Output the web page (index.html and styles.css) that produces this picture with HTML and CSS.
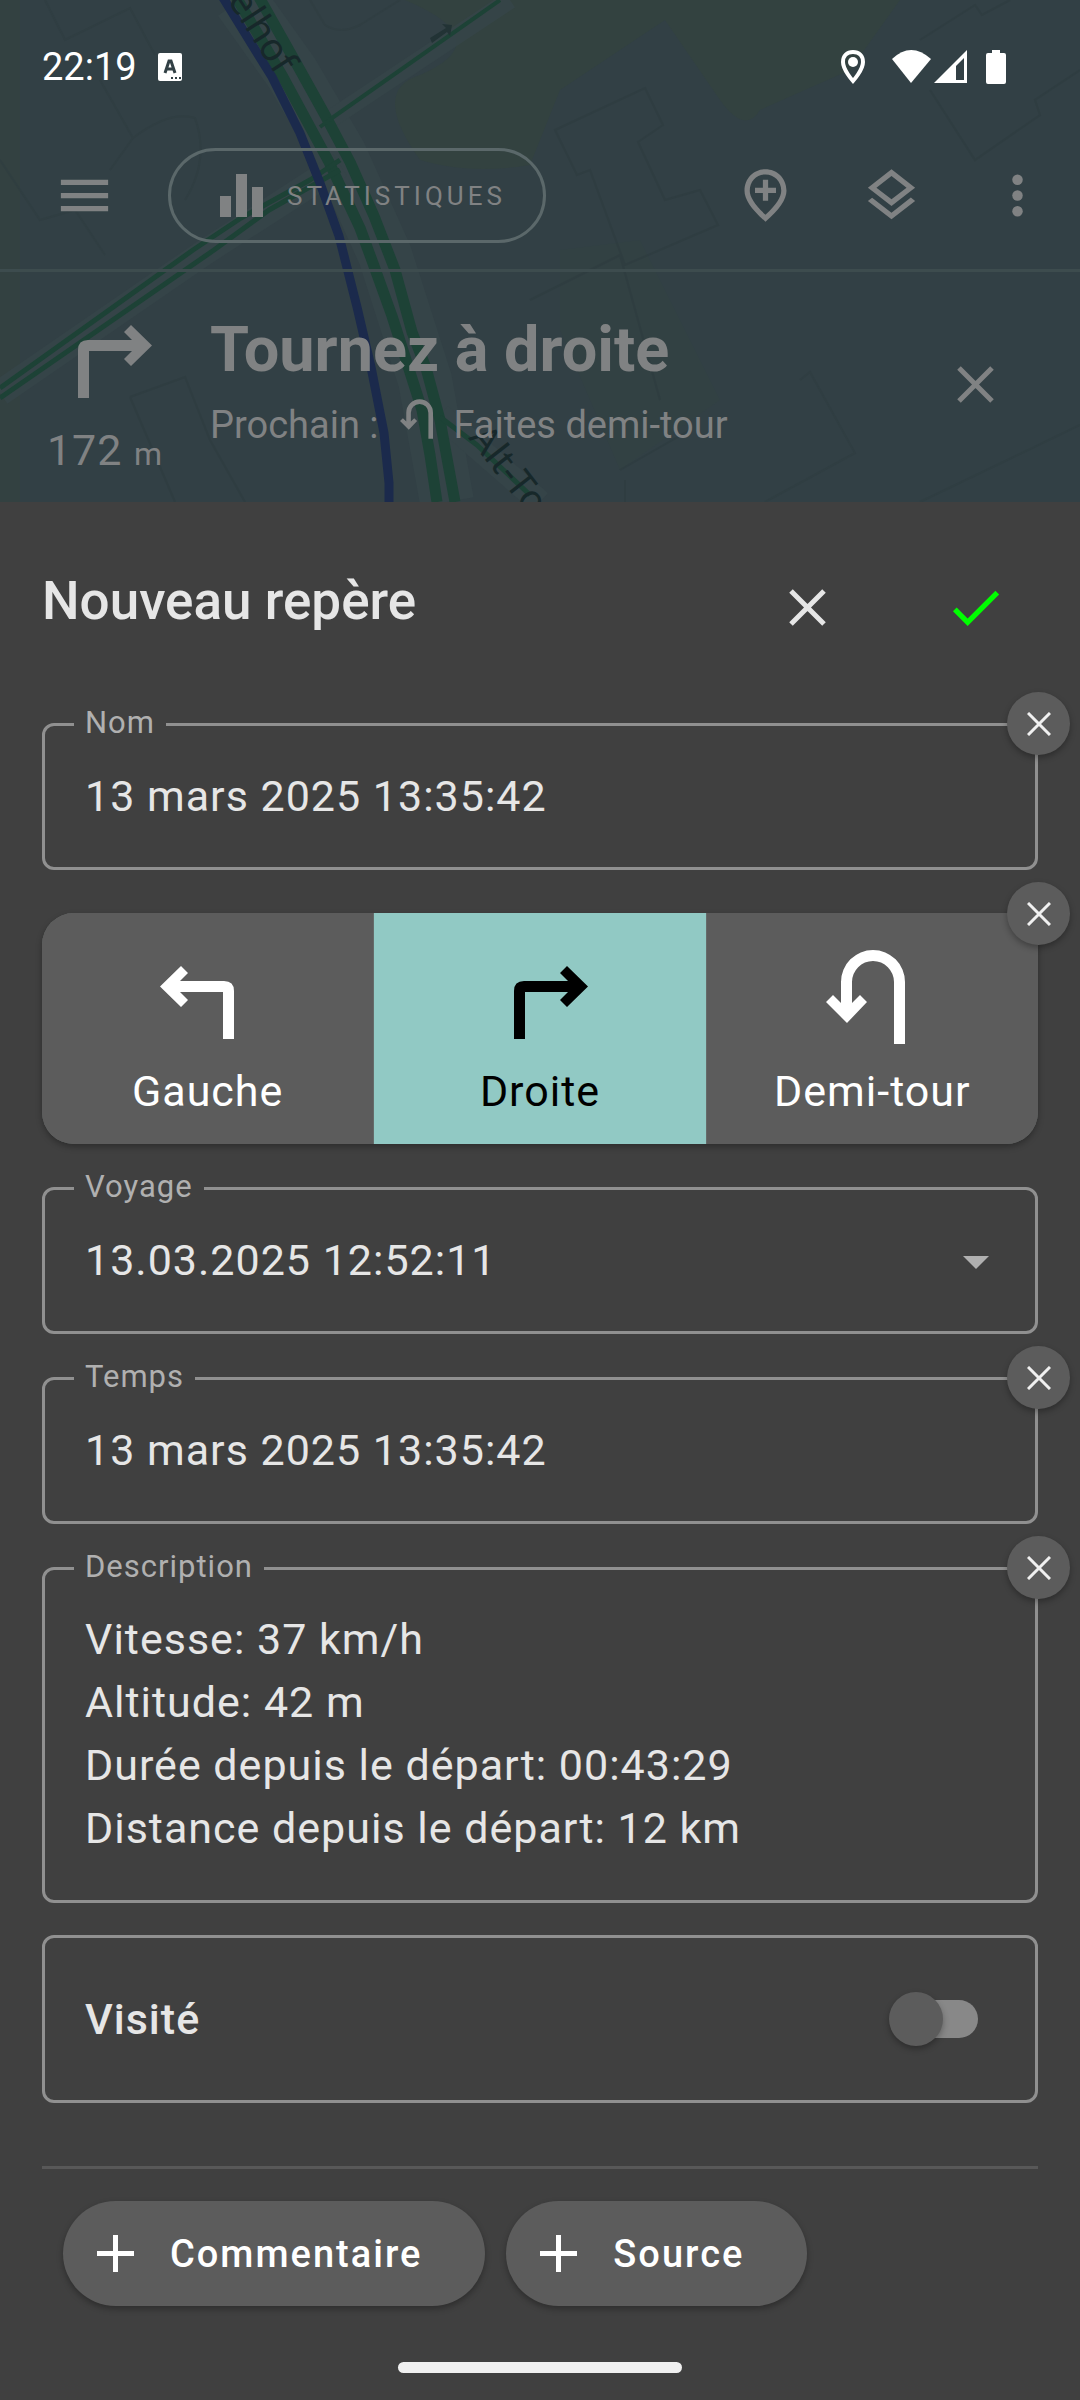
FILE: index.html
```html
<!DOCTYPE html>
<html lang="fr">
<head>
<meta charset="utf-8">
<meta name="viewport" content="width=device-width, initial-scale=1">
<title>Nouveau repère</title>
<link rel="stylesheet" href="styles.css">
</head>
<body>
<header class="top">
  <svg class="map" viewBox="0 0 1080 502" preserveAspectRatio="xMidYMin slice" aria-hidden="true">
    <rect width="1080" height="502" fill="#324045"/>
    <g fill="#334240">
      <path d="M405 0H900L850 70L760 110Q745 135 720 100L665 20L560 90L530 165Q470 175 420 160Q370 90 420 75Q500 40 405 0Z"/>
      <path d="M0 0H20V502H0Z" opacity=".6"/>
      <path d="M560 250L640 240L720 400L620 470L560 330Z" opacity=".25"/>
    </g>
    <g fill="none" stroke="#2d3b3f" stroke-width="2" opacity=".5">
      <path d="M45 0L65 40L130 8L155 55M100 80L133 138Q170 110 195 118Q210 160 185 200M133 138L110 170M0 160L40 220L75 210L105 255"/>
      <path d="M130 397L185 377L210 440L245 502M130 397L175 502"/>
      <path d="M555 130L645 88L663 125L638 142L665 200L700 190L718 225L625 265L590 170L577 175Z"/>
      <path d="M930 90L975 160L1040 115L1035 100L1080 70M920 40L975 5L982 15L1010 0"/>
      <path d="M530 300L620 255L660 400M800 380L810 372L855 453L765 502M620 470L690 430M920 502L1080 425M625 480V502"/>
      <path d="M310 0L325 25Q340 35 360 25L400 0"/>
    </g>
    <g fill="none" stroke="#37464a" opacity=".7">
      <path d="M240 0L292 73L340 155L385 255L425 380L447 502" stroke-width="54"/>
      <path d="M510 0L332 118" stroke-width="18"/>
      <path d="M0 393L205 252L340 165" stroke-width="26"/>
      <path d="M440 415L540 502" stroke-width="24"/>
    </g>
    <g fill="none" stroke="#1d4236" stroke-linejoin="round">
      <path d="M232 -10L283 77L329 162L360 228L374 266L392 316L408 366L422 410L430 455L437 502" stroke-width="11"/>
      <path d="M255 -10L300 70L325 115L350 162L374 216L395 270L412 332L426 368L440 420L455 502" stroke-width="11"/>
      <path d="M500 0L332 118L320 127" stroke-width="4"/>
      <path d="M0 388L193 250L241 218L310 180L340 160M0 398L214 250L269 210L340 170" stroke-width="5"/>
      <path d="M440 417L477 445L530 495" stroke-width="5"/>
    </g>
    <path d="M222 -4L272 77L300 133L320 183L339 236L357 307L371 367L384 433L389 483V502" fill="none" stroke="#1b2a4c" stroke-width="9"/>
    <path d="M430 38L446 28L442 24L452 25L450 36L447 32L432 43Z" fill="#223335"/>
    <g class="map__labels">
      <text transform="translate(227 0) rotate(57)">elhof</text>
      <text transform="translate(468 438) rotate(52)">Alt-To</text>
    </g>
  </svg>

  <div class="status">
    <span class="status__time">22:19</span>
    <svg width="24" height="28" viewBox="0 0 24 28" aria-hidden="true"><rect width="24" height="28" rx="2" fill="#fff"/><path d="M7 20L11 8H13L17 20M9 16H15" fill="none" stroke="#324045" stroke-width="3"/><path d="M13 24h2v2h-2zM17 24h2v2h-2zM21 24h2v2h-2z" fill="#324045"/></svg>
    <div class="status__right">
      <svg width="24" height="34" viewBox="0 0 24 34" aria-hidden="true"><path d="M12 2C6 2 2 6 2 12c0 8 10 19 10 19s10-11 10-19c0-6-4-10-10-10z" fill="none" stroke="#fff" stroke-width="4"/><circle cx="12" cy="12" r="5" fill="#fff"/></svg>
      <svg class="status__net" width="76" height="34" viewBox="0 0 76 34" aria-hidden="true" fill="#fff"><path d="M0 9Q19-9 39 9L19 33Z"/><path fill-rule="evenodd" d="M42 33L75 0V33ZM64 30H72V8L64 16Z"/></svg>
      <svg width="20" height="34" viewBox="0 0 20 34" aria-hidden="true"><path d="M6 0h8v3h4q2 0 2 2v27q0 2-2 2H2q-2 0-2-2V5q0-2 2-2h4z" fill="#fff"/></svg>
    </div>
  </div>

  <nav class="toolbar">
    <button class="tool tool--menu" type="button" aria-label="Menu"><svg class="icon" viewBox="0 0 24 24"><path d="M3 18h18v-2H3zM3 13h18v-2H3zM3 6v2h18V6z"/></svg></button>
    <button class="stats" type="button"><svg width="43" height="43" viewBox="0 0 43 43" aria-hidden="true"><path d="M0 22h11v21H0zM16 0h11v43H16zM32 13h11v30H32z"/></svg>STATISTIQUES</button>
    <div class="toolbar__end">
      <button class="tool" type="button" aria-label="Ajouter un repère"><svg class="icon" viewBox="0 0 24 24"><path fill-rule="evenodd" d="M12 2C16.2 2 20 5.22 20 10.2C20 13.5 17.3 17.4 12 22C6.7 17.4 4 13.5 4 10.2C4 5.22 7.8 2 12 2ZM18 10.2C18 6.57 15.35 4 12 4S6 6.57 6 10.2C6 12.54 7.95 15.64 12 19.34C16.05 15.64 18 12.54 18 10.2Z"/><path d="M11 6h2v3h3v2h-3v3h-2v-3H8V9h3z"/></svg></button>
      <button class="tool" type="button" aria-label="Calques"><svg class="icon" viewBox="0 0 24 24"><path d="M11.99 18.54l-7.37-5.73L3 14.07l9 7 9-7-1.63-1.27zM12 16l7.36-5.73L21 9l-9-7-9 7 1.63 1.27zM12 4.53L17.74 9 12 13.47 6.26 9z"/></svg></button>
      <button class="tool" type="button" aria-label="Plus d'options"><svg class="icon" viewBox="0 0 24 24"><circle cx="12" cy="6" r="2"/><circle cx="12" cy="12" r="2"/><circle cx="12" cy="18" r="2"/></svg></button>
    </div>
  </nav>

  <section class="guide">
    <div class="guide__turn">
      <svg width="94" height="73" viewBox="4 16 94 73" aria-hidden="true"><path d="M35 89V42H78L70 50L77 57L98 36.500L77 16L70 23L78 31H34Q24 31 24 41V89Z"/></svg>
      <p class="guide__distance">172 <small>m</small></p>
    </div>
    <div class="guide__text">
      <h2>Tournez à droite</h2>
      <p>Prochain : <svg width="33" height="40" viewBox="4 0 79 94" aria-hidden="true"><path d="M83 94H72V32A21 21 0 0 0 30 32V53L38 45L45 52L25 73L4 52L11 45L19 53V32A32 32 0 0 1 83 32Z"/></svg> Faites demi-tour</p>
    </div>
    <button class="action" type="button" aria-label="Fermer"><svg class="cross" viewBox="0 0 37 37"><path d="M2 2L35 35M35 2L2 35"/></svg></button>
  </section>
</header>

<main class="sheet">
  <form class="form">
    <div class="form__head">
      <h1>Nouveau repère</h1>
      <button class="action" type="button" aria-label="Annuler"><svg class="cross" viewBox="0 0 37 37"><path d="M2 2L35 35M35 2L2 35"/></svg></button>
      <button class="action action--ok" type="button" aria-label="Valider"><svg class="icon" viewBox="0 0 24 24"><path d="M9 16.170L4.830 12l-1.420 1.410L9 19 21 7l-1.410-1.410z"/></svg></button>
    </div>

    <div class="field">
      <fieldset>
        <legend><label for="name">Nom</label></legend>
        <input id="name" type="text" value="13 mars 2025 13:35:42">
      </fieldset>
      <button class="clear" type="button" aria-label="Effacer le nom"><svg viewBox="0 0 24 24"><path d="M1 1L23 23M23 1L1 23"/></svg></button>
    </div>

    <div class="turns">
      <div class="turns__group" role="radiogroup" aria-label="Direction">
        <label class="turn"><input type="radio" name="turn">
          <svg viewBox="0 0 100 95" aria-hidden="true"><path d="M65 89V42H22L30 50L23 57L2 36.500L23 16L30 23L22 31H66Q76 31 76 41V89Z"/></svg><span>Gauche</span></label>
        <label class="turn"><input type="radio" name="turn" checked>
          <svg viewBox="0 0 100 95" aria-hidden="true"><path d="M35 89V42H78L70 50L77 57L98 36.500L77 16L70 23L78 31H34Q24 31 24 41V89Z"/></svg><span>Droite</span></label>
        <label class="turn"><input type="radio" name="turn">
          <svg viewBox="0 0 100 95" aria-hidden="true"><path d="M83 94H72V32A21 21 0 0 0 30 32V53L38 45L45 52L25 73L4 52L11 45L19 53V32A32 32 0 0 1 83 32Z"/></svg><span>Demi-tour</span></label>
      </div>
      <button class="clear" type="button" aria-label="Effacer la direction"><svg viewBox="0 0 24 24"><path d="M1 1L23 23M23 1L1 23"/></svg></button>
    </div>

    <div class="field">
      <fieldset>
        <legend><label for="trip">Voyage</label></legend>
        <div class="select">
          <select id="trip"><option>13.03.2025 12:52:11</option></select>
          <svg width="26" height="18" viewBox="0 0 26 18" aria-hidden="true"><path d="M0 5H26L13 18Z"/></svg>
        </div>
      </fieldset>
    </div>

    <div class="field">
      <fieldset>
        <legend><label for="time">Temps</label></legend>
        <input id="time" type="text" value="13 mars 2025 13:35:42">
      </fieldset>
      <button class="clear" type="button" aria-label="Effacer le temps"><svg viewBox="0 0 24 24"><path d="M1 1L23 23M23 1L1 23"/></svg></button>
    </div>

    <div class="field">
      <fieldset>
        <legend><label for="description">Description</label></legend>
        <textarea id="description" rows="4">Vitesse: 37 km/h
Altitude: 42 m
Durée depuis le départ: 00:43:29
Distance depuis le départ: 12 km</textarea>
      </fieldset>
      <button class="clear" type="button" aria-label="Effacer la description"><svg viewBox="0 0 24 24"><path d="M1 1L23 23M23 1L1 23"/></svg></button>
    </div>

    <label class="visited"><span>Visité</span><input class="switch" type="checkbox" role="switch"></label>

    <div class="extras">
      <button class="chip" type="button"><svg viewBox="0 0 37 37" aria-hidden="true"><path d="M16 0h5v16h16v5H21v16h-5V21H0v-5h16z"/></svg>Commentaire</button>
      <button class="chip" type="button"><svg viewBox="0 0 37 37" aria-hidden="true"><path d="M16 0h5v16h16v5H21v16h-5V21H0v-5h16z"/></svg>Source</button>
    </div>
  </form>
  <div class="home"></div>
</main>
</body>
</html>
```
FILE: styles.css
```css
:root {
  --surface: #404040;
  --raised: #5c5c5c;
  --outline: #909090;
  --text: #e6e6e6;
  --hint: #b0b0b0;
  --dimmed: #808283;
  --accent: #91c9c4;
  --shadow: 0 3px 6px rgba(0, 0, 0, .3);
}

* {
  box-sizing: border-box;
}

body {
  margin: 0;
  min-height: 100vh;
  display: flex;
  flex-direction: column;
  background: var(--surface);
  color: var(--text);
  font-family: Roboto, sans-serif;
  font-size: 43px;
}

h1, h2, p {
  margin: 0;
}

svg {
  display: block;
  flex: none;
}

button, input, select, textarea {
  margin: 0;
  padding: 0;
  border: 0;
  background: none;
  color: inherit;
  font: inherit;
  letter-spacing: inherit;
}

button {
  display: flex;
  align-items: center;
  justify-content: center;
}

.icon {
  width: 63px;
  height: 63px;
  fill: currentColor;
}

.cross {
  width: 37px;
  height: 37px;
  fill: none;
  stroke: currentColor;
  stroke-width: 5;
}

/* Map and guidance */
.top {
  position: relative;
  overflow: hidden;
  color: var(--dimmed);
}

.map {
  position: absolute;
  inset: 0;
  width: 100%;
  height: 100%;
  z-index: -1;
}

.map__labels {
  fill: #17282a;
  font-family: "Noto Sans", sans-serif;
  font-size: 38px;
}

.status {
  display: flex;
  align-items: center;
  gap: 21px;
  height: 122px;
  padding: 12px 74px 0 42px;
  color: #fff;
}

.status__time {
  font-size: 38px;
}

.status__right {
  display: flex;
  align-items: center;
  gap: 18px;
  margin-left: auto;
}

.status__net {
  margin-left: 9px;
}

.toolbar {
  display: flex;
  align-items: center;
  height: 150px;
  border-bottom: 3px solid #3d4c4e;
}

.tool {
  width: 126px;
  height: 126px;
}

.tool--menu {
  width: 168px;
}

.stats {
  gap: 24px;
  height: 95px;
  padding: 0 37px 0 49px;
  border: 3px solid #5b686a;
  border-radius: 48px;
  font-size: 26px;
  letter-spacing: 4px;
  fill: currentColor;
}

.toolbar__end {
  display: flex;
  margin-left: auto;
}

.guide {
  display: flex;
  min-height: 230px;
  padding: 0 42px 6px 0;
  fill: currentColor;
}

.guide__turn {
  display: flex;
  flex-direction: column;
  align-items: center;
  width: 210px;
  padding-top: 53px;
}

.guide__distance {
  margin-top: 27px;
  line-height: 50px;
  letter-spacing: 1px;
}

.guide__distance small {
  font-size: 32px;
}

.guide__text {
  flex: 1;
  padding-top: 41px;
}

.guide__text h2 {
  font-size: 63px;
  font-weight: 700;
  line-height: 74px;
}

.guide__text p {
  display: flex;
  align-items: center;
  gap: 21px;
  margin-top: 12px;
  font-size: 38px;
  line-height: 44px;
}

.guide__text svg {
  margin-bottom: 12px;
}

.action {
  align-self: center;
  width: 126px;
  height: 126px;
}

.action--ok {
  color: #0f0;
}

/* Bottom sheet */
.sheet {
  display: flex;
  flex: 1;
  flex-direction: column;
  padding: 42px 42px 27px;
}

.form__head {
  display: flex;
  gap: 42px;
  height: 126px;
  margin-bottom: 35px;
}

.form__head h1 {
  flex: 1;
  padding-top: 26px;
  font-size: 53px;
  font-weight: 500;
  line-height: 62px;
}

.field, .turns {
  position: relative;
}

.field {
  margin-top: 25px;
}

.turns {
  margin-top: 43px;
}

.field fieldset {
  min-width: 0;
  margin: 0;
  padding: 0 29px 19px;
  border: 3px solid var(--outline);
  border-radius: 12px;
}

.field legend {
  padding: 0 11px 4px;
  color: var(--hint);
  font-size: 31px;
  line-height: 35px;
  letter-spacing: 1px;
}

.field label {
  display: block;
}

.field input, .field select, .field textarea {
  display: block;
  width: 100%;
  height: 104px;
  padding: 0 11px;
  appearance: none;
  letter-spacing: 1px;
  outline: 0;
}

.field textarea {
  height: 293px;
  padding: 20px 11px;
  line-height: 63px;
  resize: none;
  overflow: hidden;
}

.select {
  display: grid;
  align-items: center;
}

.select > * {
  grid-area: 1 / 1;
}

.select svg {
  justify-self: end;
  margin-right: 17px;
  fill: var(--hint);
  pointer-events: none;
}

.clear {
  position: absolute;
  top: -13px;
  right: -32px;
  width: 63px;
  height: 63px;
  border-radius: 50%;
  background: var(--raised);
  box-shadow: var(--shadow);
}

.turns .clear {
  top: -31px;
}

.clear svg {
  width: 24px;
  height: 24px;
  fill: none;
  stroke: #f0f0f0;
  stroke-width: 3;
}

.turns__group {
  display: grid;
  grid-template-columns: repeat(3, 1fr);
  gap: 1px;
  overflow: hidden;
  border-radius: 32px;
  background: #656b6a;
  box-shadow: var(--shadow);
}

.turn {
  display: flex;
  flex-direction: column;
  align-items: center;
  gap: 8px;
  height: 231px;
  padding-top: 37px;
  background: var(--raised);
  color: #fff;
  fill: currentColor;
  letter-spacing: 1px;
  line-height: 76px;
}

.turn:has(:checked) {
  background: var(--accent);
  color: #000;
}

.turn input {
  position: absolute;
  opacity: 0;
}

.turn svg {
  width: 100px;
  height: 95px;
}

.visited {
  display: flex;
  align-items: center;
  justify-content: space-between;
  height: 168px;
  margin-top: 32px;
  padding: 0 57px 0 40px;
  border: 3px solid var(--outline);
  border-radius: 12px;
  font-weight: 500;
  letter-spacing: 1px;
}

.switch {
  display: grid;
  align-items: center;
  width: 89px;
  height: 54px;
  appearance: none;
}

.switch::before, .switch::after {
  content: "";
  grid-area: 1 / 1;
}

.switch::before {
  height: 38px;
  margin-left: 8px;
  border-radius: 19px;
  background: #888;
}

.switch::after {
  width: 54px;
  height: 54px;
  border-radius: 50%;
  background: var(--raised);
  box-shadow: var(--shadow);
}

.extras {
  display: flex;
  gap: 21px;
  margin-top: 63px;
  padding: 32px 21px 0;
  border-top: 3px solid #585858;
}

.chip {
  gap: 36px;
  height: 105px;
  padding: 0 63px 0 34px;
  border-radius: 53px;
  background: var(--raised);
  box-shadow: var(--shadow);
  color: #fff;
  font-size: 38px;
  font-weight: 500;
  letter-spacing: 2px;
}

.chip svg {
  width: 37px;
  height: 37px;
  fill: currentColor;
}

.home {
  width: 284px;
  height: 11px;
  margin: auto auto 0;
  border-radius: 6px;
  background: #f0f0f0;
}
```
